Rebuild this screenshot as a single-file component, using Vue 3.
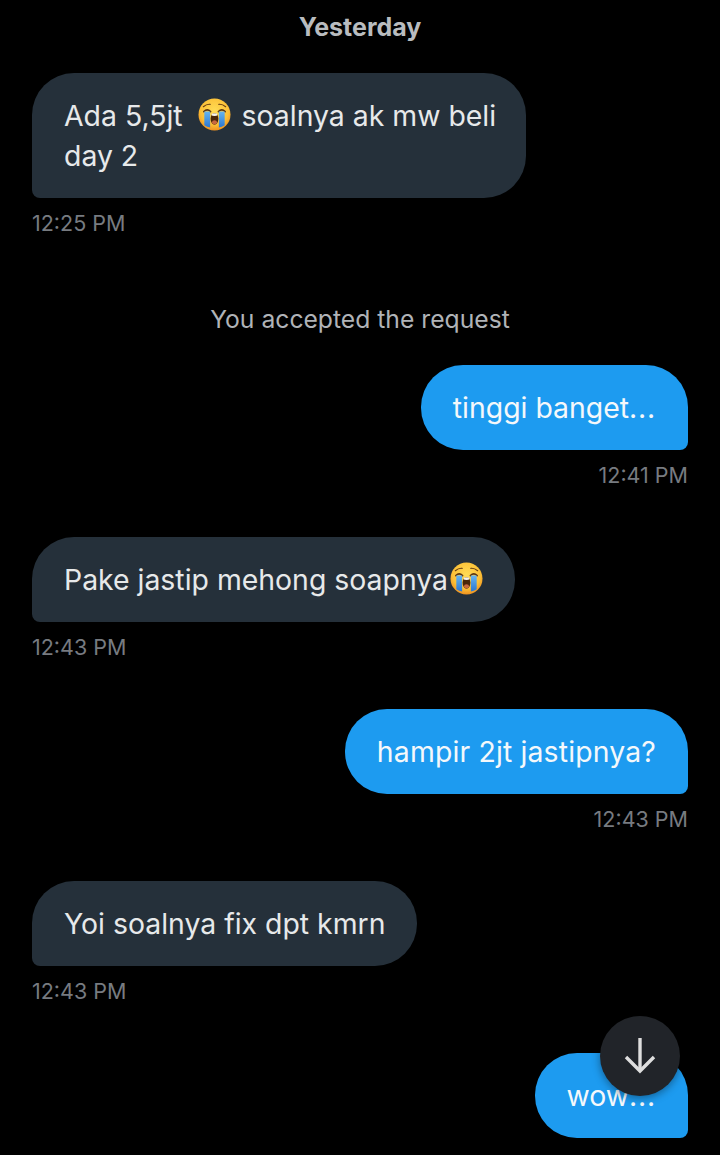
<template>
  <div class="chat">
    <svg width="0" height="0" class="defs">
      <defs>
        <radialGradient id="face" cx="50%" cy="38%" r="62%">
          <stop offset="0" stop-color="#ffdc55" />
          <stop offset="0.7" stop-color="#fcc037" />
          <stop offset="1" stop-color="#ef921f" />
        </radialGradient>
        <linearGradient id="tear" x1="0" y1="0" x2="0" y2="1">
          <stop offset="0" stop-color="#66b4ee" />
          <stop offset="1" stop-color="#2a76d2" />
        </linearGradient>
        <symbol id="sob" viewBox="0 0 34 34">
          <circle cx="17" cy="17" r="16.5" fill="url(#face)" />
          <path d="M5.5 9 Q9 6 12.5 6.5" fill="none" stroke="#6b3f12" stroke-width="1.2" stroke-linecap="round" />
          <path d="M28.5 9 Q25 6 21.5 6.5" fill="none" stroke="#6b3f12" stroke-width="1.2" stroke-linecap="round" />
          <path d="M6 14 Q9.5 10.5 13 14" fill="none" stroke="#5b3410" stroke-width="1.6" stroke-linecap="round" />
          <path d="M21 14 Q24.5 10.5 28 14" fill="none" stroke="#5b3410" stroke-width="1.6" stroke-linecap="round" />
          <path d="M6.5 14 H12.5 V30.5 Q9.5 30 6.5 28 Z" fill="url(#tear)" />
          <path d="M21.5 14 H27.5 V28 Q24.5 30 21.5 30.5 Z" fill="url(#tear)" />
          <ellipse cx="17" cy="21.5" rx="4" ry="6" fill="#4a2508" />
          <ellipse cx="17" cy="17.2" rx="3" ry="1.4" fill="#f4f1ea" />
          <ellipse cx="17" cy="25" rx="2.6" ry="2.2" fill="#c9673f" />
        </symbol>
      </defs>
    </svg>

    <div class="day">Yesterday</div>

    <div class="msg in">
      <div class="bubble wide">
        Ada 5,5jt <svg class="emoji spaced"><use href="#sob" /></svg> soalnya ak mw beli day 2
      </div>
      <div class="time">12:25 PM</div>
    </div>

    <div class="notice">You accepted the request</div>

    <div class="msg out">
      <div class="bubble">tinggi banget<span class="dots">...</span></div>
      <div class="time">12:41 PM</div>
    </div>

    <div class="msg in">
      <div class="bubble">
        Pake jastip mehong soapnya<svg class="emoji tail"><use href="#sob" /></svg>
      </div>
      <div class="time">12:43 PM</div>
    </div>

    <div class="msg out">
      <div class="bubble loose">hampir 2jt jastipnya?</div>
      <div class="time">12:43 PM</div>
    </div>

    <div class="msg in">
      <div class="bubble">Yoi soalnya fix dpt kmrn</div>
      <div class="time">12:43 PM</div>
    </div>

    <div class="msg out">
      <div class="bubble">wow<span class="dots">...</span></div>
    </div>

    <button class="fab">
      <svg width="32" height="36" viewBox="0 0 32 36" fill="none" stroke="#dedede" stroke-width="3.4">
        <path d="M16 0 V33" />
        <path d="M2 19 L16 33 L30 19" />
      </svg>
    </button>
  </div>
</template>

<script setup>
</script>

<style>
html, body {
  margin: 0;
  background: #000;
}
</style>

<style scoped>
.chat {
  position: relative;
  height: 1155px;
  overflow: hidden;
  box-sizing: border-box;
  padding: 0 32px;
  background: #000;
  font-family: Inter, "Noto Sans", sans-serif;
  display: flex;
  flex-direction: column;
}

.defs {
  position: absolute;
}

.day {
  height: 54px;
  line-height: 54px;
  margin-bottom: 19px;
  text-align: center;
  font-size: 25px;
  font-weight: 700;
  color: #b9bcbf;
}

.msg {
  display: flex;
  flex-direction: column;
  margin-bottom: 49px;
}
.msg.in { align-items: flex-start; }
.msg.out { align-items: flex-end; }

.bubble {
  box-sizing: border-box;
  padding: 22.5px 32px;
  font-size: 28.4px;
  line-height: 40px;
  color: #e7e9ea;
}
.msg.in .bubble {
  background: #25303a;
  border-radius: 42px 42px 42px 8px;
}
.msg.out .bubble {
  background: #1d9bf0;
  color: #f4f8fb;
  border-radius: 42px 42px 8px 42px;
}
.bubble.wide {
  max-width: 494px;
  padding-right: 26px;
}
.bubble.loose {
  letter-spacing: 0.15px;
}

.dots {
  letter-spacing: 0.8px;
}

.emoji {
  width: 33px;
  height: 33px;
  vertical-align: -5px;
}
.emoji.spaced {
  margin: 0 3px 0 7px;
}
.emoji.tail {
  margin-left: 2px;
}

.time {
  margin-top: 12px;
  height: 26px;
  line-height: 26px;
  font-size: 21.5px;
  color: #777b80;
}

.notice {
  margin-top: 19px;
  margin-bottom: 31px;
  height: 30px;
  line-height: 30px;
  text-align: center;
  font-size: 24.7px;
  color: #b0b3b7;
}

.fab {
  position: absolute;
  left: 600px;
  top: 1016px;
  width: 80px;
  height: 80px;
  padding: 0;
  border: none;
  border-radius: 50%;
  background: #212429;
  box-shadow: 0 2px 8px rgba(0, 0, 0, 0.4);
  display: flex;
  align-items: center;
  justify-content: center;
}
</style>
